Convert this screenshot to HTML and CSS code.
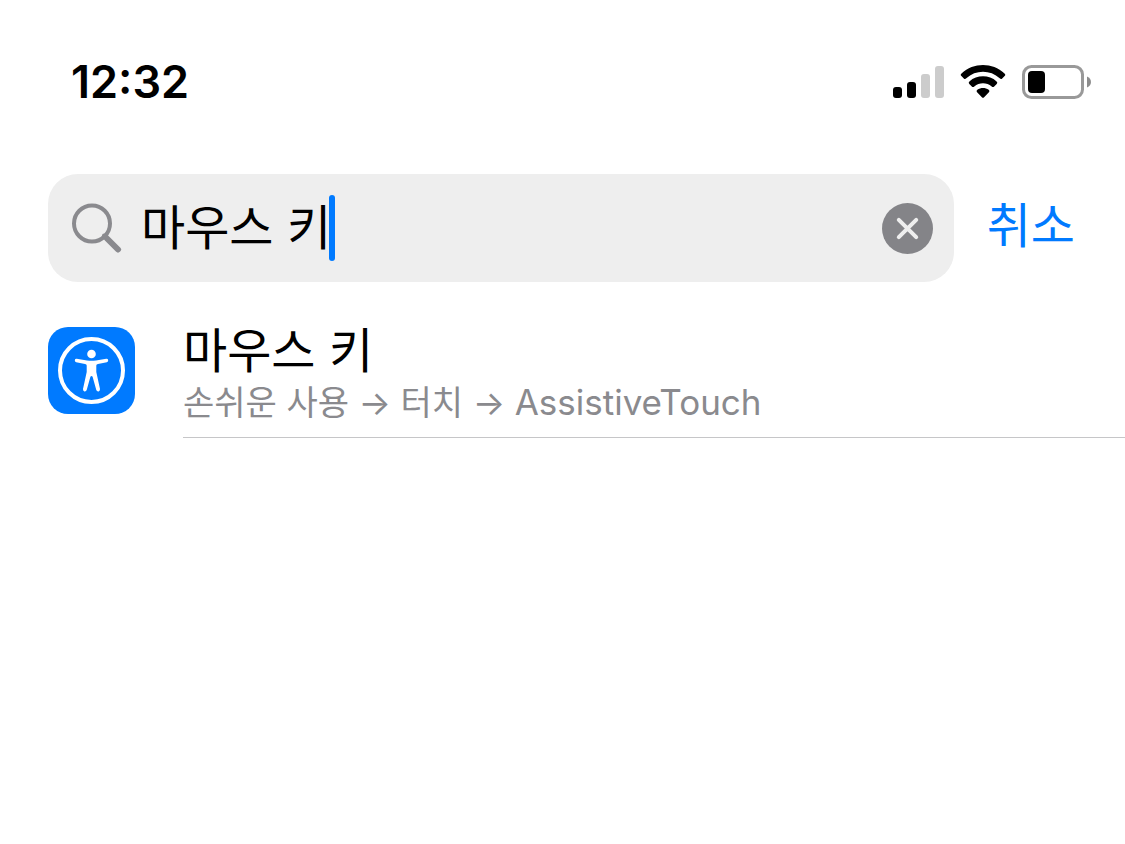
FILE: index.html
```html
<!DOCTYPE html>
<html lang="ko">

<head>
    <meta charset="UTF-8">
    <meta name="viewport" content="width=device-width, initial-scale=1.0">
    <title>설정</title>
    <link rel="stylesheet" href="styles.css">
</head>

<body>
    <header class="status_bar">
        <time class="clock">12:32</time>
        <div class="status_icons">
            <svg width="52" height="34" viewBox="0 0 52 34">
                <rect x="1" y="22" width="9" height="11" rx="3" />
                <rect x="15" y="17" width="9" height="16" rx="3" />
                <rect class="dim" x="29" y="9" width="9" height="24" rx="3" />
                <rect class="dim" x="43" y="1" width="9" height="32" rx="3" />
            </svg>
            <svg width="46" height="34" viewBox="0 0 46 34">
                <path d="M1.4 11.1 Q0 9.7 1.5 8.4 C13.5 -2.8 32.5 -2.8 44.5 8.4 Q46 9.7 44.6 11.1 L42.2 13.4 Q41 14.5 39.7 13.3 C30.3 4.7 15.7 4.7 6.3 13.3 Q5 14.5 3.8 13.4 Z" />
                <path d="M9.3 19 Q8 17.7 9.4 16.4 C17 9.6 29 9.6 36.6 16.4 Q38 17.7 36.7 19 L34.2 21.4 Q33 22.5 31.7 21.4 C26.7 17.2 19.3 17.2 14.3 21.4 Q13 22.5 11.8 21.4 Z" />
                <path d="M17.1 27.2 Q15.8 25.9 17.3 24.8 C20.7 22.3 25.3 22.3 28.7 24.8 Q30.2 25.9 28.9 27.2 L24.1 32.2 Q23 33.3 21.9 32.2 Z" />
            </svg>
            <svg width="70" height="34" viewBox="0 0 70 34">
                <rect class="shell" x="1.5" y="1.5" width="59" height="31" rx="8" />
                <rect x="6" y="6" width="17" height="22" rx="4" />
                <path class="cap" d="M65 11.5 C70.3 13.5 70.3 20.5 65 22.5 Z" />
            </svg>
        </div>
    </header>

    <form class="search">
        <div class="search_box">
            <svg class="search_icon" width="50" height="50" viewBox="0 0 50 50">
                <circle cx="20" cy="20.5" r="18" />
                <path class="handle" d="M35 35.5 L46 46.5" />
                <path d="M32 32.5 L35 35.5" />
            </svg>
            <input type="text" class="search_input" aria-label="검색" value="마우스 키" autocomplete="off">
            <span class="caret"></span>
            <button type="reset" class="clear_btn" aria-label="지우기">
                <svg width="51" height="51" viewBox="0 0 51 51">
                    <circle cx="25.5" cy="25.5" r="25.5" />
                    <path d="M16.8 16.8 L34.2 34.2 M34.2 16.8 L16.8 34.2" />
                </svg>
            </button>
        </div>
        <button type="button" class="cancel_btn">취소</button>
    </form>

    <main>
        <a href="#" class="result">
            <svg class="result_icon" width="87" height="87" viewBox="0 0 87 87">
                <circle class="ring" cx="43.5" cy="43.5" r="31.5" />
                <circle class="man" cx="43.5" cy="27" r="4.3" />
                <path class="man" d="M28.7 31.8 L39 33.4 Q43.5 34 48 33.4 L58.3 31.8 Q60 31.7 60.2 33.2 Q60.3 34.8 58.8 35.2 L50 36.9 Q48.3 37.2 48.3 38.6 V45 L52 62 Q52.2 64 50.6 64.4 Q48.9 64.7 48.3 63 L44.6 49.8 Q43.5 48 42.4 49.8 L38.7 63 Q38.1 64.7 36.4 64.4 Q34.8 64 35 62 L38.7 45 V38.6 Q38.7 37.2 37 36.9 L28.2 35.2 Q26.7 34.8 26.8 33.2 Q27 31.7 28.7 31.8 Z" />
            </svg>
            <div class="result_text">
                <h2>마우스 키</h2>
                <p>손쉬운 사용 → 터치 → <span lang="en">AssistiveTouch</span></p>
            </div>
        </a>
    </main>
</body>

</html>
```
FILE: styles.css
```css
* {
    margin: 0;
    padding: 0;
    box-sizing: border-box;
}

body {
    background: white;
    color: black;
    font-family: Inter, "Noto Sans CJK KR", sans-serif;
}

svg {
    display: block;
    flex: none;
}

.status_bar {
    display: flex;
    justify-content: space-between;
    align-items: center;
    padding: 56px 33px 0 71px;
}

.clock {
    font-size: 45px;
    line-height: 52px;
    font-weight: 600;
}

.status_icons {
    display: flex;
    gap: 16px;
}

.status_icons .dim {
    fill: rgb(204, 204, 204);
}

.status_icons .shell {
    fill: none;
    stroke: rgb(153, 153, 153);
    stroke-width: 3;
}

.status_icons .cap {
    fill: rgb(140, 140, 140);
}

.search {
    display: flex;
    align-items: center;
    gap: 33px;
    padding: 66px 50px 0 48px;
}

.search_box {
    flex: 1;
    display: flex;
    align-items: center;
    height: 108px;
    padding: 0 21px 0 24px;
    background: rgb(238, 238, 238);
    border-radius: 30px;
}

.search_icon {
    fill: none;
    stroke: rgb(138, 138, 142);
    stroke-width: 4;
    stroke-linecap: round;
}

.search_icon .handle {
    stroke-width: 6;
}

.search_input {
    field-sizing: content;
    margin-left: 19px;
    border: none;
    outline: none;
    background: none;
    color: black;
    font-family: inherit;
    font-size: 48px;
    font-weight: 400;
    line-height: 66px;
}

.caret {
    width: 6px;
    height: 66px;
    margin-left: -2px;
    border-radius: 3px;
    background: rgb(0, 122, 255);
}

.clear_btn {
    margin-left: auto;
    border: none;
    background: none;
    cursor: pointer;
}

.clear_btn circle {
    fill: rgb(132, 132, 136);
}

.clear_btn path {
    fill: none;
    stroke: rgb(238, 238, 238);
    stroke-width: 4;
    stroke-linecap: round;
}

.cancel_btn {
    padding-bottom: 4px;
    border: none;
    background: none;
    color: rgb(0, 122, 255);
    font-family: inherit;
    font-size: 48px;
    font-weight: 400;
    line-height: 66px;
    cursor: pointer;
}

.result {
    display: flex;
    gap: 48px;
    padding: 40px 0 0 48px;
    color: black;
    text-decoration: none;
}

.result_icon {
    margin-top: 5px;
    border-radius: 20px;
    background: rgb(0, 122, 255);
}

.result_icon .ring {
    fill: none;
    stroke: white;
    stroke-width: 4;
}

.result_icon .man {
    fill: white;
}

.result_text {
    flex: 1;
    padding-bottom: 12px;
    border-bottom: 1px solid rgb(198, 198, 200);
}

.result_text h2 {
    font-size: 48px;
    font-weight: 400;
    line-height: 58px;
}

.result_text p {
    color: rgb(138, 138, 142);
    font-size: 34px;
    font-weight: 400;
    line-height: 45px;
}

.result_text span {
    font-size: 35px;
}
```
